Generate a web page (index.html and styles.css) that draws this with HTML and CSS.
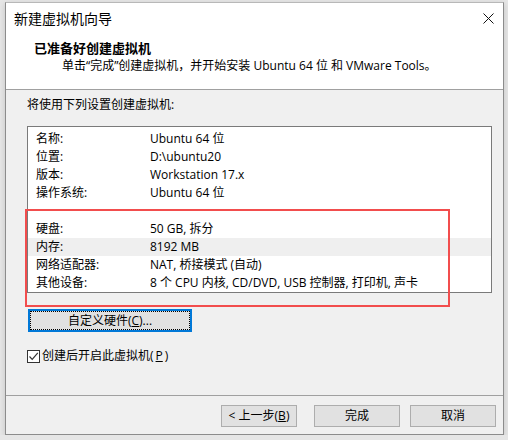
FILE: index.html
```html
<!DOCTYPE html>
<html lang="zh-CN">
  <head>
    <meta charset="UTF-8" />
    <title>新建虚拟机向导</title>
    <link rel="stylesheet" href="styles.css">
  </head>
  <body>
    <div class="window">
      <!-- Header -->
      <div class="header">
        <div class="titlebar">
          <span class="title">新建虚拟机向导</span>
          <svg class="close" width="11" height="11" viewBox="0 0 11 11">
            <path d="M0.5 0.5 L10.5 10.5 M10.5 0.5 L0.5 10.5" stroke="#111" stroke-width="1" fill="none" />
          </svg>
        </div>
        <div class="heading">已准备好创建虚拟机</div>
        <div class="subtitle">单击“完成”创建虚拟机，并开始安装 Ubuntu 64 位 和 VMware Tools。</div>
      </div>

      <!-- Summary -->
      <div class="content">
        <div class="intro">将使用下列设置创建虚拟机:</div>
        <div class="summary">
          <div class="row"><span>名称:</span><span>Ubuntu 64 位</span></div>
          <div class="row"><span>位置:</span><span>D:\ubuntu20</span></div>
          <div class="row"><span>版本:</span><span>Workstation 17.x</span></div>
          <div class="row"><span>操作系统:</span><span>Ubuntu 64 位</span></div>
          <div class="row"></div>
          <div class="row"><span>硬盘:</span><span>50 GB, 拆分</span></div>
          <div class="row shaded"><span>内存:</span><span>8192 MB</span></div>
          <div class="row"><span>网络适配器:</span><span>NAT, 桥接模式 (自动)</span></div>
          <div class="row"><span>其他设备:</span><span>8 个 CPU 内核, CD/DVD, USB 控制器, 打印机, 声卡</span></div>
          <div class="mark"></div>
        </div>

        <button class="custom-btn"><span>自定义硬件(<u>C</u>)...</span></button>

        <label class="check">
          <span class="box">
            <svg width="11" height="11" viewBox="0 0 11 11">
              <path d="M1.5 5.5 L4.2 8.3 L9.8 1.8" stroke="#333" stroke-width="1.2" fill="none" />
            </svg>
          </span>
          创建后开启此虚拟机(<u>P</u>)
        </label>
      </div>

      <!-- Footer buttons -->
      <div class="footer">
        <button class="btn back-btn">&lt; 上一步(<u>B</u>)</button>
        <button class="btn finish-btn">完成</button>
        <button class="btn">取消</button>
      </div>
    </div>
  </body>
</html>
```

FILE: styles.css
```css
body {
  margin: 0;
  padding: 2px 5px 0;
  background: #e6e6e6;
  font-family: "Open Sans", "Noto Sans CJK SC", sans-serif;
  font-size: 12px;
  color: #000;
}

.window {
  box-sizing: border-box;
  width: 499px;
  height: 433px;
  background: #f0f0f0;
  border: 1px solid #8c8c8c;
  border-top-color: #b8b8b8;
  box-shadow: 0 2px 6px rgba(0, 0, 0, 0.15);
  display: flex;
  flex-direction: column;
}

/* Header */
.header {
  background: #fff;
  height: 86px;
  border-bottom: 1px solid #a0a0a0;
}

.titlebar {
  display: flex;
  justify-content: space-between;
  align-items: center;
  height: 30px;
  padding: 0 9px 0 8px;
}

.title {
  font-size: 14px;
  font-family: "Noto Sans CJK SC", sans-serif;
}

.heading {
  margin-top: 6px;
  padding-left: 28px;
  font-size: 13px;
  font-weight: bold;
  line-height: 18px;
}

.subtitle {
  padding-left: 56px;
  line-height: 18px;
}

/* Content */
.content {
  flex: 1;
  padding: 6px 0 0 21px;
}

.intro {
  line-height: 18px;
}

.summary {
  position: relative;
  box-sizing: border-box;
  width: 465px;
  height: 167px;
  margin-top: 12px;
  padding-top: 3px;
  background: #fff;
  border: 1px solid #7a7a7a;
}

.row {
  display: grid;
  grid-template-columns: 114px 1fr;
  height: 18px;
  line-height: 18px;
  padding-left: 8px;
}

.row.shaded {
  background: #efefef;
}

/* red annotation box */
.mark {
  position: absolute;
  left: -3px;
  top: 82px;
  width: 421px;
  height: 94px;
  border: 2px solid #f24d4d;
}

.custom-btn {
  display: block;
  box-sizing: border-box;
  width: 164px;
  height: 23px;
  margin: 16px 0 0 1px;
  padding: 0;
  background: #e1e1e1;
  border: 2px solid #0078d7;
  font: inherit;
  cursor: pointer;
}

.custom-btn span {
  display: block;
  height: 100%;
  box-sizing: border-box;
  border: 1px dotted #000;
  line-height: 17px;
}

.check {
  display: flex;
  align-items: center;
  gap: 2px;
  margin-top: 17px;
  line-height: 14px;
}

.box {
  box-sizing: border-box;
  width: 13px;
  height: 13px;
  border: 1px solid #333;
  background: #fff;
  display: flex;
}

/* Footer */
.footer {
  height: 38px;
  border-top: 1px solid #a0a0a0;
  display: flex;
  justify-content: flex-end;
  align-items: flex-start;
  padding: 9px 7px 0 0;
  box-sizing: border-box;
  height: 39px;
}

.btn {
  box-sizing: border-box;
  width: 86px;
  height: 22px;
  padding: 0;
  margin-left: 10px;
  background: #e1e1e1;
  border: 1px solid #adadad;
  font: inherit;
  line-height: 20px;
  cursor: pointer;
}

.back-btn {
  width: 76px;
}

.finish-btn {
  margin-left: 17px;
}
```
